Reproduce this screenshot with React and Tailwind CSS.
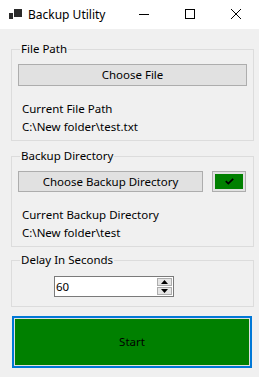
const FONT = { fontFamily: '"Noto Sans", "Open Sans", sans-serif' }

function GroupBox({ title, className = '', children }) {
  return (
    <fieldset className={`ml-[11px] mr-[5px] shrink-0 border border-[#dcdcdc] px-[6px] ${className}`}>
      <legend className="ml-[2px] px-[1px] text-[11.5px] leading-[16px] text-black">{title}</legend>
      {children}
    </fieldset>
  )
}

function TitleBar() {
  return (
    <div className="flex h-[29px] shrink-0 items-center bg-white">
      <svg className="ml-[9px]" width="13" height="11" viewBox="0 0 13 11">
        <rect x="5" y="0" width="8" height="8" fill="#2b2b2b" />
        <rect x="0" y="4" width="4" height="6" fill="#2b2b2b" />
      </svg>
      <span className="ml-[6px] text-[12px] leading-[16px] text-black">Backup Utility</span>
      <div className="ml-auto flex items-center">
        <svg width="46" height="29" viewBox="0 0 46 29">
          <line x1="18" y1="14.5" x2="28" y2="14.5" stroke="#000" strokeWidth="1" />
        </svg>
        <svg width="46" height="29" viewBox="0 0 46 29">
          <rect x="18.5" y="9.5" width="9" height="9" fill="none" stroke="#000" strokeWidth="1" />
        </svg>
        <svg width="46" height="29" viewBox="0 0 46 29">
          <path d="M18 9 L28 19 M28 9 L18 19" stroke="#000" strokeWidth="1" />
        </svg>
      </div>
    </div>
  )
}

function NumericUpDown({ value }) {
  return (
    <div className="ml-[36px] mt-[8px] flex h-[21px] w-[120px] items-stretch border border-[#7a7a7a] bg-white">
      <span className="flex-1 pl-[1px] text-[11.5px] leading-[19px] text-black">{value}</span>
      <div className="my-[1px] mr-[1px] flex w-[15px] flex-col gap-[1px]">
        <div className="flex flex-1 items-center justify-center border border-[#adadad] bg-[#e5e5e5]">
          <svg width="7" height="4" viewBox="0 0 7 4"><path d="M3.5 0 L7 4 L0 4 Z" fill="#000" /></svg>
        </div>
        <div className="flex flex-1 items-center justify-center border border-[#adadad] bg-[#e5e5e5]">
          <svg width="7" height="4" viewBox="0 0 7 4"><path d="M0 0 L7 0 L3.5 4 Z" fill="#000" /></svg>
        </div>
      </div>
    </div>
  )
}

export default function App() {
  return (
    <div className="flex min-h-[377px] w-[259px] flex-col bg-[#f0f0f0]" style={FONT}>
      <TitleBar />

      <GroupBox title="File Path" className="mt-[12px] pb-[4px]">
        <button className="mt-[7px] flex h-[22px] w-full items-center justify-center border border-[#adadad] bg-[#e1e1e1] text-[11.5px] text-black">
          Choose File
        </button>
        <div className="mt-[14px] pl-[4px] text-[11.5px] leading-[18px] text-black">
          <div>Current File Path</div>
          <div>C:\New folder\test.txt</div>
        </div>
      </GroupBox>

      <GroupBox title="Backup Directory" className="mt-[7px] pb-[4px]">
        <div className="mt-[7px] flex gap-[9px]">
          <button className="flex h-[21px] w-[185px] items-center justify-center border border-[#adadad] bg-[#e1e1e1] text-[11.5px] text-black">
            Choose Backup Directory
          </button>
          <button className="flex h-[21px] w-[34px] items-center justify-center border border-[#adadad] bg-[#e1e1e1] p-[2px]">
            <span className="flex h-full w-full items-center justify-center bg-[#008000]">
              <svg width="9" height="7" viewBox="0 0 9 7">
                <path d="M0.8 3.2 L3.3 5.6 L8.2 0.8" fill="none" stroke="#000" strokeWidth="1.8" />
              </svg>
            </span>
          </button>
        </div>
        <div className="mt-[14px] pl-[4px] text-[11.5px] leading-[18px] text-black">
          <div>Current Backup Directory</div>
          <div>C:\New folder\test</div>
        </div>
      </GroupBox>

      <GroupBox title="Delay In Seconds" className="mt-[5px] pb-[9px]">
        <NumericUpDown value="60" />
      </GroupBox>

      <button className="ml-[12px] mr-[7px] mt-[9px] h-[52px] shrink-0 border-2 border-[#0078d7] bg-[#008000] p-0">
        <span className="flex h-full w-full items-center justify-center border border-[#e0e0e0] text-[11.5px] text-black">
          Start
        </span>
      </button>
    </div>
  )
}
